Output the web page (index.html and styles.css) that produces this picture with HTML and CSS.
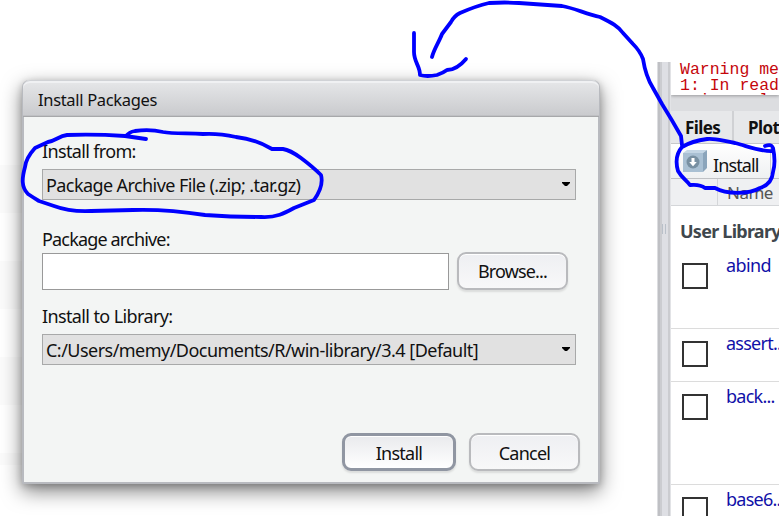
FILE: index.html
```html
<!DOCTYPE html>
<html lang="en">
<head>
<meta charset="utf-8">
<title>Install Packages</title>
<link rel="stylesheet" href="styles.css">
</head>
<body>
<main class="screen">
  <div class="backdrop"></div>
  <section class="dialog">
    <header class="dialog-title"><span>Install Packages</span></header>
    <div class="dialog-body">
      <label class="label from">Install from:</label>
      <div class="select"><span class="archive-type">Package Archive File (.zip; .tar.gz)</span><svg class="arrow" viewBox="0 0 8 4"><path d="M0 0h8v1L5 4H3L0 1z"/></svg></div>
      <label class="label archive">Package archive:</label>
      <div class="file-row"><input class="path" type="text"><button class="button browse"><span>Browse...</span></button></div>
      <label class="label library">Install to Library:</label>
      <div class="select"><span class="lib-path">C:/Users/memy/Documents/R/win-library/3.4 [Default]</span><svg class="arrow" viewBox="0 0 8 4"><path d="M0 0h8v1L5 4H3L0 1z"/></svg></div>
      <div class="actions"><button class="button primary"><span>Install</span></button><button class="button"><span>Cancel</span></button></div>
    </div>
  </section>
  <aside class="workspace">
    <div class="splitter"><i class="grip"></i></div>
    <div class="panes">
      <pre class="console">Warning me
1: In read
  incompl</pre>
      <div class="tabs"><div class="tab files">Files</div><div class="tab">Plot</div></div>
      <div class="toolbar">
        <svg class="package-icon" viewBox="0 0 24 23"><path d="M0 3 4 0h20l-4 3z" fill="#c4d6e5"/><path d="m20 3 4-3v18l-4 4z" fill="#8ba5bb"/><path d="M0 3h20v19H0z" fill="#a9c0d3"/><circle cx="10" cy="12" r="6.500" fill="#7890a2"/><path d="M8.500 8h3v4h2.300L10 16.200 6.200 12h2.300z" fill="#fff"/></svg>
        <span>Install</span><i class="divider"></i>
      </div>
      <div class="columns"><div class="column check"></div><div class="column">Name</div></div>
      <div class="packages">
        <div class="group">User Library</div>
        <div class="row r1"><i class="checkbox"></i><a>abind</a></div>
        <div class="row r2"><i class="checkbox"></i><a>assert...</a></div>
        <div class="row r3"><i class="checkbox"></i><a>back...</a></div>
        <div class="row r4"><i class="checkbox"></i><a>base6...</a></div>
      </div>
    </div>
  </aside>
  <svg class="ink" viewBox="0 0 779 516">
    <path d="M432 57C434 49 439 42 442 34L451 22Q454 16 460 13Q476 6 489 3Q505 2 519 3L562 6C574 8 586 14 600 17C612 23 618 26 623 33L633 44Q640 51 643 59C645 72 648 80 653 88L662 104Q672 120 681 136L682 145"/>
    <path d="M414 33V52C414 62 420 66 420 75Q427 77 437 75Q443 73 447 70C455 70 461 65 466 59"/>
    <path d="M146 139L125 136Q95 134 67 135C59 136 55 141 48 142L35 148Q26 158 25 167C22 178 21 187 28 194Q34 198 39 201L54 206Q70 212 91 211L133 210Q167 209 205 215Q233 217 261 217C276 218 285 213 294 208L314 200Q324 186 321 175Q313 167 301 158Q290 150 283 149H272Q255 139 236 137Q218 133 203 134C188 133 173 134 163 132Q150 129 135 131Q129 132 126 136"/>
    <path d="M765 146Q774 143 773 151C762 152 750 147 735 143C722 141 716 138 707 139Q692 141 682 147C675 155 676 164 678 171C682 178 686 180 690 185Q700 184 705 188H715C726 194 748 195 760 188Q772 184 773 172Q776 162 773 148"/>
  </svg>
</main>
</body>
</html>
```
FILE: styles.css
```css
* { box-sizing: border-box; }
body { margin: 0; background: #fff; font-family: "Noto Sans", sans-serif; font-size: 18px; color: #111; }
button, input { font: inherit; color: inherit; }
.screen { position: relative; width: 779px; height: 516px; overflow: hidden; display: flex; justify-content: space-between; }
.backdrop { position: absolute; left: 0; top: 165px; width: 22px; height: 300px; background: repeating-linear-gradient(#fbfbfb 0 48px, #fff 48px 96px); }
.dialog { position: relative; margin: 80px 0 0 22px; width: 578px; height: 404px; border: 1px solid #b8babf; border-width: 0 2px 2px; border-radius: 7px 7px 0 0; background: #f3f5f4; box-shadow: 0 7px 20px rgba(0,0,0,.5), 0 2px 7px rgba(0,0,0,.2); }
.dialog-title { height: 37px; margin: 0 -1px; border: solid #d0d2d6; border-width: 1px 0 0; border-bottom: 1px solid #a7a8aa; border-radius: 7px 7px 0 0; box-shadow: inset 0 2px #f0f1f3, inset 0 -1px #bfc0c3; background: linear-gradient(#e6e7e9, #c9cacd); padding: 0 15px; line-height: 38px; font-size: 16.500px; letter-spacing: -.32px; }
.dialog-body { padding: 0 18px; display: flex; flex-direction: column; }
.label { white-space: nowrap; line-height: 26px; }
.label.from { height: 31px; margin-top: 21px; letter-spacing: -.65px; }
.label.archive { height: 27px; margin-top: 26px; letter-spacing: -.83px; }
.label.library { height: 31px; margin-top: 13px; letter-spacing: -.62px; }
.select { width: 534px; height: 31px; border: 1px solid #a8a9a9; background: #e1e1e1; display: flex; align-items: center; justify-content: space-between; padding: 0 5px 0 3px; white-space: nowrap; }
.archive-type { letter-spacing: -.58px; }
.lib-path { letter-spacing: -.53px; }
.arrow { width: 8px; height: 4px; margin-bottom: 1px; }
.file-row { display: flex; gap: 8px; height: 37px; align-items: center; }
.path { width: 407px; height: 37px; border: 1px solid #999; background: #fff; padding: 0 4px; }
.button { width: 111px; height: 38px; padding: 1px 0 0; border: 2px solid #b9babd; border-radius: 9px; background: linear-gradient(#eeeff2, #f8f8f9); box-shadow: 0 2px 2px rgba(0,0,0,.1), inset 0 1px #fff; letter-spacing: -.75px; }
.button.browse { position: relative; top: -1px; letter-spacing: -.85px; }
.actions { display: flex; gap: 13px; margin: 68px 0 0 300px; }
.button.primary { width: 114px; border: 3px solid #9096a2; background: linear-gradient(#e9eaed, #fff); }
.workspace { width: 122px; margin-top: 62px; height: 454px; display: flex; }
.splitter { width: 14px; flex: none; background: linear-gradient(90deg,#dcdde0 0 1px,#bfc0c4 1px 3px,#cbccd0 3px 5px,#dedfe4 5px 11px,#cbccd0 11px 13px,#e2e3e6 13px); }
.grip { display: block; width: 4px; height: 10px; margin: 162px 0 0 5px; border: solid #b9c0c9; border-width: 0 1px; }
.panes { width: 108px; flex: none; overflow: hidden; background: #dcdde0; }
.console { margin: 0; height: 33px; overflow: hidden; background: #fff; padding-left: 9px; font: 16.500px/16px "Liberation Mono", monospace; color: #c5060b; text-indent: 0; box-shadow: 0 1px 3px rgba(0,0,0,.3); line-height: 15.500px; }
.tabs { display: flex; height: 32px; margin-top: 16px; font-weight: 700; line-height: 34px; font-size: 17px; letter-spacing: -.6px; background: #e7e8ea; }
.tab { flex: none; width: 61px; padding-left: 14px; white-space: nowrap; }
.tab.files { width: 63px; border-right: 2px solid #d0d1d4; }
.toolbar { height: 36px; background: linear-gradient(#fff, #eff1f2); border-bottom: 1px solid #c0c2c5; border-top: 1px solid #c7c8ca; display: flex; align-items: center; padding-left: 12px; gap: 6px; letter-spacing: -.9px; }
.toolbar span { padding-top: 7px; }
.package-icon { width: 24px; height: 23px; flex: none; }
.divider { width: 1px; height: 26px; margin-left: 6px; background: #ccc; }
.columns { display: flex; height: 27px; border-bottom: 1px solid #d4d6d9; background: #eff0f2; color: #555; font-size: 17px; line-height: 28px; letter-spacing: -.5px; }
.column { padding-left: 9px; }
.column.check { width: 47px; border-right: 1px solid #d4d6d9; }
.packages { background: #fff; height: 310px; overflow: hidden; }
.group { height: 47px; padding: 11px 0 0 9px; font-weight: 700; color: #3f474d; white-space: nowrap; line-height: 28px; letter-spacing: -.75px; }
.row { display: flex; gap: 18px; padding: 10px 0 0 11px; border-bottom: 1px solid #dcdcdc; color: #1010a8; white-space: nowrap; letter-spacing: -.75px; line-height: 24px; }
.r1 { height: 76px; padding-top: 10px; letter-spacing: -.6px; }
.r2 { height: 53px; padding-top: 12px; }
.r3 { height: 103px; padding-top: 12px; }
.r4 { height: 80px; padding-top: 12px; }
.row a { margin-top: -10px; }
.checkbox { flex: none; width: 26px; height: 26px; border: 2px solid #333; background: #fff; }
.ink { position: absolute; inset: 0; width: 779px; height: 516px; fill: none; stroke: #00f; stroke-width: 3.800px; stroke-linecap: round; stroke-linejoin: round; pointer-events: none; }
```
